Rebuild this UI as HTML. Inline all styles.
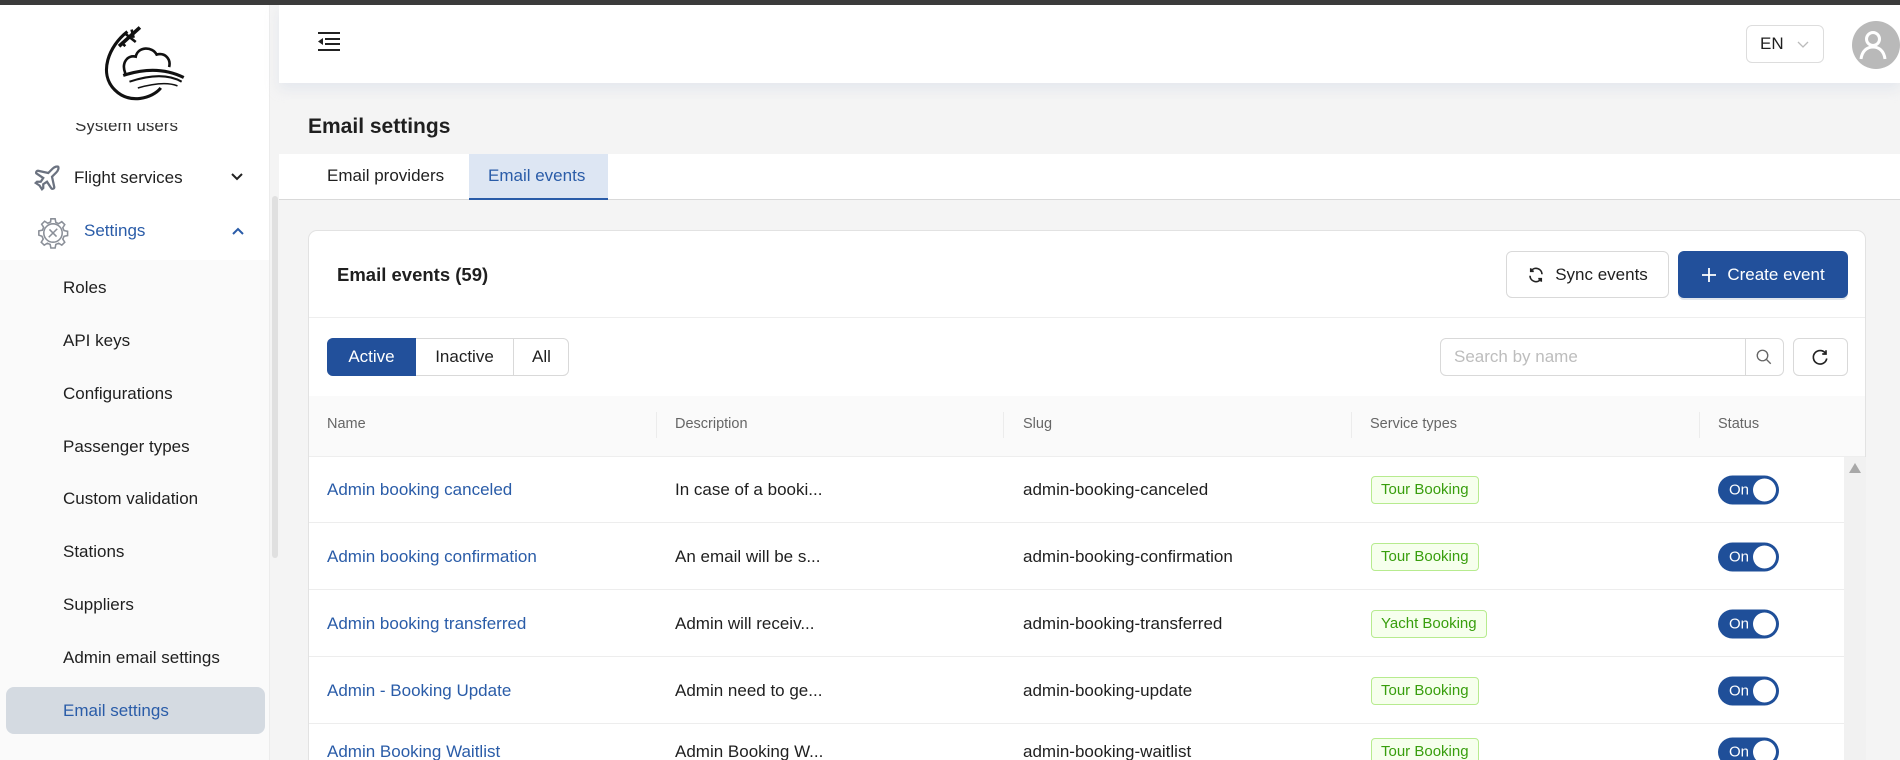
<!DOCTYPE html>
<html><head><meta charset="utf-8"><style>
*{box-sizing:border-box;margin:0;padding:0}
html,body{width:1900px;height:760px;overflow:hidden}
body{background:#f4f4f4;font-family:"Liberation Sans",sans-serif;color:#1f1f1f}
#w{position:relative;width:1900px;height:760px;overflow:hidden}
.abs{position:absolute}
.topbar{left:0;top:0;width:1900px;height:5px;background:#3b3b3b;z-index:5}
.side{left:0;top:5px;width:270px;height:755px;background:#fff;border-right:1px solid #ececec;overflow:hidden}
.sub{left:0;width:270px;height:600px;background:#fafafa}
.si{position:absolute;left:63px;font-size:17px;color:#1f1f1f;transform:translateY(-50%)}
.header{left:279px;top:5px;width:1621px;height:78px;background:#fff;box-shadow:0 6px 12px rgba(200,210,225,.35)}
.card{left:308px;top:230px;width:1558px;height:540px;background:#fff;border:1px solid #e2e2e2;border-radius:9px}
.btn{position:absolute;border-radius:6px;font-size:17px;display:flex;align-items:center;justify-content:center;gap:10px}
.th{position:absolute;top:424px;font-size:14.5px;color:#666;transform:translateY(-50%)}
.sep{position:absolute;top:412px;width:1px;height:26px;background:#ececec}
.cell{position:absolute;font-size:17px;transform:translateY(-50%);white-space:nowrap}
.name{color:#2a5ca8}
.tag{position:absolute;height:28px;padding:0 9px;border:1px solid #b7eb8f;background:#f6ffed;color:#389e0d;font-size:15px;border-radius:4px;line-height:26px;transform:translateY(-50%)}
.tog{position:absolute;left:1718px;width:61px;height:29px;border-radius:15px;background:#1f4f99;transform:translateY(-50%)}
.tog span{position:absolute;left:11px;top:0;line-height:29px;color:#fff;font-size:15px}
.tog i{position:absolute;right:3px;top:3px;width:23px;height:23px;border-radius:50%;background:#fff}
.rl{position:absolute;left:309px;width:1535px;height:1px;background:#ededed}
</style></head><body><div id="w">
<div class="abs topbar"></div>
<div class="abs side">
 <div class="si" style="top:121px;left:75px;color:#333">System users</div>
 <div class="abs" style="left:0;top:0;width:270px;height:118px;background:#fff"></div>
 <svg class="abs" style="left:94px;top:18px" width="96" height="84" viewBox="0 0 92 80" fill="none" stroke="#111">
  <path d="M32 8 C14 22 4 48 20 64 C34 78 56 72 64 62" stroke-width="3"/>
  <path d="M30 48 C26 38 32 30 40 32 C42 22 56 22 60 30 C68 28 74 34 72 42" stroke-width="2.5"/>
  <path d="M28 50 C46 44 66 42 86 52" stroke-width="3"/>
  <path d="M34 56 C52 50 70 48 84 56" stroke-width="2"/>
  <path d="M42 62 C56 58 70 56 80 60" stroke-width="1.5"/>
  <path d="M24 22 L44 4" stroke-width="3.5"/><path d="M30 10 L40 18 M36 6 L38 14 M26 18 L30 22" stroke-width="2.5"/>
 </svg>
 <svg class="abs" style="left:32px;top:158px" width="30" height="30" viewBox="0 0 24 24" fill="none" stroke="#6b7280" stroke-width="1.8"><path d="M17.8 19.2L16 11l3.5-3.5C21 6 21.5 4 21 3c-1-.5-3 0-4.5 1.5L13 8 4.8 6.2c-.5-.1-.9.1-1.1.5l-.3.5c-.2.5-.1 1 .3 1.3L9 12l-2 3H4l-1 1 3 2 2 3 1-1v-3l3-2 3.5 5.3c.3.4.8.5 1.3.3l.5-.2c.4-.3.6-.7.5-1.2z"/></svg>
 <div class="si" style="top:173px;left:74px">Flight services</div>
 <svg class="abs" style="left:231px;top:168px" width="12" height="8" viewBox="0 0 12 8" fill="none" stroke="#222" stroke-width="2"><path d="M1 1l5 5 5-5"/></svg>
 <svg class="abs" style="left:36px;top:211px" width="34" height="34" viewBox="0 0 24 24" fill="none" stroke="#8a8f98" stroke-width="1.1"><circle cx="12" cy="12" r="6.5"/><path d="M10.5 2h3l.5 2.5 2 .9 2.2-1.4 2.1 2.1-1.4 2.2.9 2 2.5.5v3l-2.5.5-.9 2 1.4 2.2-2.1 2.1-2.2-1.4-2 .9-.5 2.5h-3l-.5-2.5-2-.9-2.2 1.4-2.1-2.1 1.4-2.2-.9-2L2 13.5v-3l2.5-.5.9-2L4 5.8l2.1-2.1L8.3 5.1l2-.9z"/><path d="M9 15l6-6M9.5 9.5l5 5"/></svg>
 <div class="si" style="top:226px;left:84px;color:#2a5ca8">Settings</div>
 <svg class="abs" style="left:232px;top:222px" width="12" height="8" viewBox="0 0 12 8" fill="none" stroke="#2a5ca8" stroke-width="2"><path d="M1 7l5-5 5 5"/></svg>
 <div class="abs sub" style="top:255px"></div>
 <div class="abs" style="left:6px;top:682px;width:259px;height:47px;background:#d4dae1;border-radius:8px"></div>
 <div class="si" style="top:283px">Roles</div>
 <div class="si" style="top:336px">API keys</div>
 <div class="si" style="top:389px">Configurations</div>
 <div class="si" style="top:442px">Passenger types</div>
 <div class="si" style="top:494px">Custom validation</div>
 <div class="si" style="top:547px">Stations</div>
 <div class="si" style="top:600px">Suppliers</div>
 <div class="si" style="top:653px">Admin email settings</div>
 <div class="si" style="top:706px;color:#2a5ca8">Email settings</div>
 <div class="si" style="top:762px">Payment methods</div>
</div>
<div class="abs" style="left:271px;top:105px;width:8px;height:655px;background:#f4f4f4"></div>
<div class="abs" style="left:272px;top:196px;width:6px;height:362px;background:#e0e0e0;border-radius:3px"></div>
<div class="abs header"></div>
<svg class="abs" style="left:318px;top:31px" width="22" height="20" viewBox="0 0 22 20" fill="#222"><rect x="0" y="1" width="22" height="2"/><rect x="7" y="7" width="15" height="2"/><rect x="7" y="12" width="15" height="2"/><rect x="0" y="18" width="22" height="2"/><path d="M0 10.5 L5 7 L5 14Z"/></svg>
<div class="abs" style="left:1746px;top:25px;width:78px;height:38px;border:1px solid #ddd;border-radius:6px;font-size:17px;line-height:36px;padding-left:13px">EN<svg class="abs" style="left:50px;top:15px" width="12" height="7" viewBox="0 0 12 7" fill="none" stroke="#bbb" stroke-width="1.3"><path d="M1 1l5 5 5-5"/></svg></div>
<div class="abs" style="left:1852px;top:21px;width:48px;height:48px;border-radius:50%;background:#b9b9b9;overflow:hidden">
 <svg width="48" height="48" viewBox="0 0 48 48" fill="none" stroke="#fff" stroke-width="3"><circle cx="21" cy="18" r="6.5"/><path d="M9 38c1-8 6-12 12-12s11 4 12 12"/></svg></div>
<div class="abs" style="left:308px;top:115px;font-size:21px;font-weight:bold">Email settings</div>
<div class="abs" style="left:279px;top:154px;width:1621px;height:46px;background:#fff;border-bottom:1px solid #d9d9d9"></div>
<div class="abs" style="left:469px;top:154px;width:139px;height:46px;background:#dde6f3;border-bottom:2px solid #2a5ca8"></div>
<div class="abs" style="left:327px;top:166px;font-size:17px">Email providers</div>
<div class="abs" style="left:488px;top:166px;font-size:17px;color:#2a5ca8">Email events</div>
<div class="abs card"></div>
<div class="abs" style="left:337px;top:264px;font-size:18.5px;font-weight:bold">Email events (59)</div>
<div class="btn" style="left:1506px;top:251px;width:163px;height:47px;border:1px solid #d9d9d9;background:#fff">
 <svg width="18" height="18" viewBox="0 0 24 24" fill="none" stroke="#222" stroke-width="2.2"><path d="M20 11a8 8 0 0 0-14.5-4.5M4 13a8 8 0 0 0 14.5 4.5"/><path d="M5 3v4h4M19 21v-4h-4"/></svg>Sync events</div>
<div class="btn" style="left:1678px;top:251px;width:170px;height:47px;background:#22509b;color:#fff;box-shadow:0 2px 0 rgba(0,40,100,.12)"><svg width="16" height="16" viewBox="0 0 16 16" stroke="#fff" stroke-width="1.8"><path d="M8 1v14M1 8h14"/></svg>Create event</div>
<div class="abs" style="left:309px;top:317px;width:1556px;height:1px;background:#eee"></div>
<div class="abs" style="left:327px;top:338px;width:242px;height:38px;border:1px solid #d9d9d9;border-radius:6px;background:#fff"></div>
<div class="abs" style="left:327px;top:338px;width:89px;height:38px;background:#22509b;border-radius:6px 0 0 6px;color:#fff;font-size:17px;line-height:38px;text-align:center">Active</div>
<div class="abs" style="left:416px;top:338px;width:98px;height:38px;border-right:1px solid #d9d9d9;font-size:17px;line-height:38px;text-align:center">Inactive</div>
<div class="abs" style="left:514px;top:338px;width:55px;height:38px;font-size:17px;line-height:38px;text-align:center">All</div>
<div class="abs" style="left:1440px;top:338px;width:344px;height:38px;border:1px solid #d9d9d9;border-radius:6px;background:#fff;font-size:17px;color:#bdbdbd;line-height:36px;padding-left:13px">Search by name</div>
<div class="abs" style="left:1745px;top:338px;width:1px;height:38px;background:#d9d9d9"></div>
<svg class="abs" style="left:1755px;top:348px" width="18" height="18" viewBox="0 0 24 24" fill="none" stroke="#666" stroke-width="1.8"><circle cx="10" cy="10" r="7"/><path d="M15 15l6 6"/></svg>
<div class="abs" style="left:1793px;top:338px;width:55px;height:38px;border:1px solid #d9d9d9;border-radius:6px;background:#fff"></div>
<svg class="abs" style="left:1811px;top:348px" width="18" height="18" viewBox="0 0 24 24" fill="none" stroke="#222" stroke-width="2.2"><path d="M20 8A9 9 0 1 0 21 14"/><path d="M20 3v5h-5"/></svg>
<div class="abs" style="left:309px;top:396px;width:1556px;height:61px;background:#fafafa;border-bottom:1px solid #eee"></div>
<div class="th" style="left:327px">Name</div><div class="sep" style="left:656px"></div>
<div class="th" style="left:675px">Description</div><div class="sep" style="left:1003px"></div>
<div class="th" style="left:1023px">Slug</div><div class="sep" style="left:1351px"></div>
<div class="th" style="left:1370px">Service types</div><div class="sep" style="left:1699px"></div>
<div class="th" style="left:1718px">Status</div>
<div class="abs" style="left:1844px;top:457px;width:22px;height:303px;background:#f1f1f1"></div>
<div class="abs" style="left:1849px;top:463px;width:0;height:0;border-left:6px solid transparent;border-right:6px solid transparent;border-bottom:10px solid #a8a8a8"></div>

<div class="cell name" style="left:327px;top:490px">Admin booking canceled</div>
<div class="cell" style="left:675px;top:490px">In case of a booki...</div>
<div class="cell" style="left:1023px;top:490px">admin-booking-canceled</div>
<div class="tag" style="left:1371px;top:490px">Tour Booking</div>
<div class="tog" style="top:490px"><span>On</span><i></i></div>
<div class="rl" style="top:522px"></div>

<div class="cell name" style="left:327px;top:557px">Admin booking confirmation</div>
<div class="cell" style="left:675px;top:557px">An email will be s...</div>
<div class="cell" style="left:1023px;top:557px">admin-booking-confirmation</div>
<div class="tag" style="left:1371px;top:557px">Tour Booking</div>
<div class="tog" style="top:557px"><span>On</span><i></i></div>
<div class="rl" style="top:589px"></div>

<div class="cell name" style="left:327px;top:624px">Admin booking transferred</div>
<div class="cell" style="left:675px;top:624px">Admin will receiv...</div>
<div class="cell" style="left:1023px;top:624px">admin-booking-transferred</div>
<div class="tag" style="left:1371px;top:624px">Yacht Booking</div>
<div class="tog" style="top:624px"><span>On</span><i></i></div>
<div class="rl" style="top:656px"></div>

<div class="cell name" style="left:327px;top:691px">Admin - Booking Update</div>
<div class="cell" style="left:675px;top:691px">Admin need to ge...</div>
<div class="cell" style="left:1023px;top:691px">admin-booking-update</div>
<div class="tag" style="left:1371px;top:691px">Tour Booking</div>
<div class="tog" style="top:691px"><span>On</span><i></i></div>
<div class="rl" style="top:723px"></div>

<div class="cell name" style="left:327px;top:752px">Admin Booking Waitlist</div>
<div class="cell" style="left:675px;top:752px">Admin Booking W...</div>
<div class="cell" style="left:1023px;top:752px">admin-booking-waitlist</div>
<div class="tag" style="left:1371px;top:752px">Tour Booking</div>
<div class="tog" style="top:752px"><span>On</span><i></i></div>
</div></body></html>
